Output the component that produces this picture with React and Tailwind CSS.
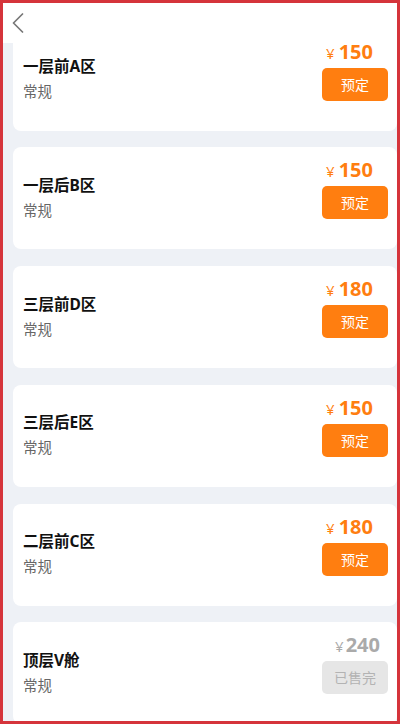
const zones = [
  { name: "一层前A区", price: 150 },
  { name: "一层后B区", price: 150 },
  { name: "三层前D区", price: 180 },
  { name: "三层后E区", price: 150 },
  { name: "二层前C区", price: 180 },
  { name: "顶层V舱", price: 240, soldOut: true },
];

const font = { fontFamily: '"Noto Sans", "Noto Sans CJK SC", sans-serif' };

const ZoneCard = ({ zone }) => (
  <div className="flex justify-between bg-white rounded-lg h-[102px] shrink-0 pl-[10px] pr-[9px]">
    <div className="flex flex-col justify-center gap-[5px] pb-[2px]">
      <p className="text-[15.5px] font-bold text-[#111] leading-[20px]">{zone.name}</p>
      <p className="text-[14.5px] text-[#666] leading-[20px]">常规</p>
    </div>

    <div className="flex flex-col items-end pt-[10px]">
      <p
        className={`flex items-baseline leading-[26px] ${
          zone.soldOut ? "text-[#aaaaaa] pr-[8px]" : "text-[#ff7e10] pr-[15px]"
        }`}
      >
        <span className={`text-[15px] ${zone.soldOut ? "mr-[2px]" : "mr-[4px]"}`}>¥</span>
        <span className="text-[20px] font-bold" style={{ fontFamily: '"Open Sans", sans-serif' }}>
          {zone.price}
        </span>
      </p>
      {zone.soldOut ? (
        <button className="mt-[2px] w-[66px] h-[33px] rounded-[5px] bg-[#e6e6e6] text-[#b3b3b3] text-[14px]">
          已售完
        </button>
      ) : (
        <button className="mt-[2px] w-[66px] h-[33px] rounded-[5px] bg-[#ff7e10] text-white text-[14px]">
          预定
        </button>
      )}
    </div>
  </div>
);

export default function App() {
  return (
    <div
      className="relative w-[400px] h-[724px] box-border border-[3px] border-[#d5343b] bg-[#eef1f6] overflow-hidden"
      style={font}
    >
      {/* header over the scrolled list */}
      <div className="absolute top-0 left-0 right-0 h-[40px] bg-white z-10 flex items-center pl-[9px]">
        <svg width="12" height="20" viewBox="0 0 12 20" fill="none">
          <polyline
            points="10.5,1 1.5,10 10.5,19"
            stroke="#777"
            strokeWidth="1.7"
            strokeLinecap="round"
            strokeLinejoin="round"
          />
        </svg>
      </div>

      <div className="flex flex-col gap-[16.75px] pt-[25.5px] pl-[10px]">
        {zones.map((z) => (
          <ZoneCard key={z.name} zone={z} />
        ))}
      </div>
    </div>
  );
}
